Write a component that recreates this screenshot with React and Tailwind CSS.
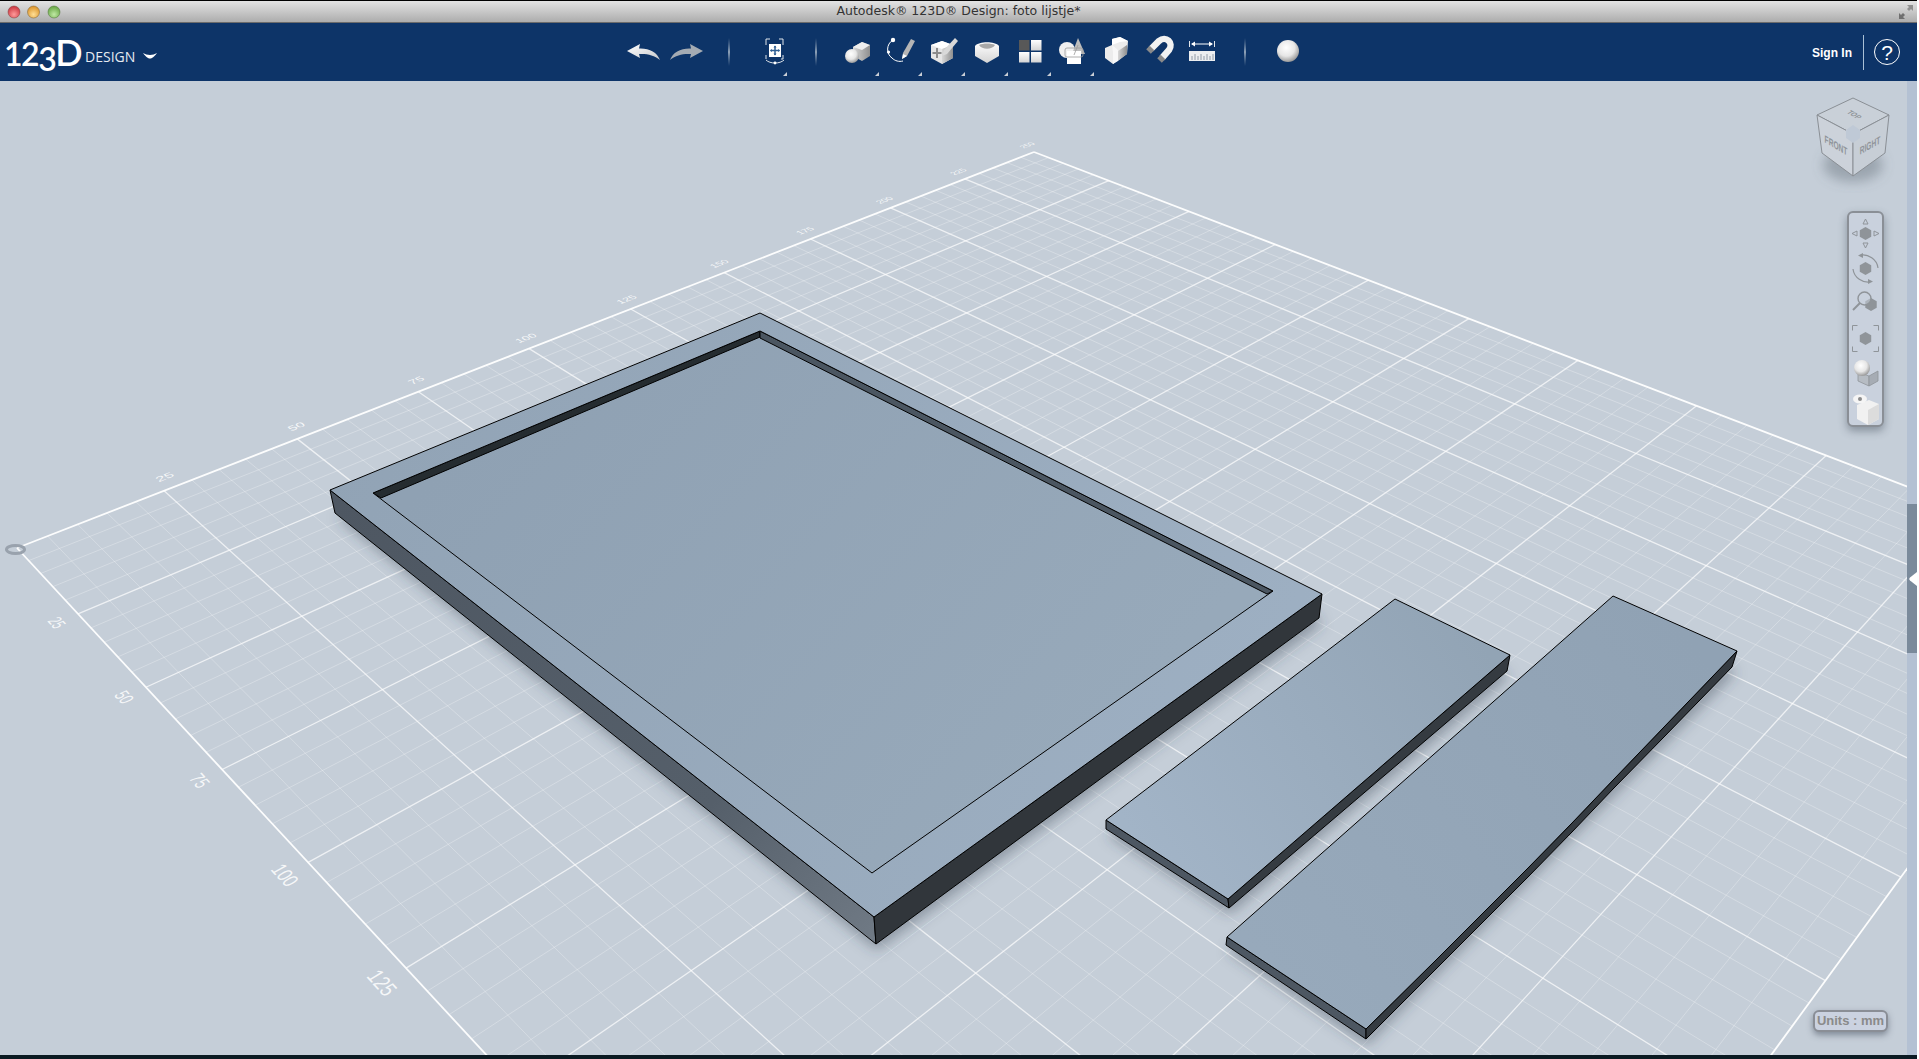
import React from 'react'

// projective map from grid units (0..250) to screen pixels
const makeHomography = () => {
  const [x0, y0] = [17, 548]
  const [x1, y1] = [1034, 152]
  const [x2, y2] = [2125, 570]
  const [x3, y3] = [1205, 1831]
  const dx1 = x1 - x2, dx2 = x3 - x2, sx = x0 - x1 + x2 - x3
  const dy1 = y1 - y2, dy2 = y3 - y2, sy = y0 - y1 + y2 - y3
  const det = dx1 * dy2 - dx2 * dy1
  const g = (sx * dy2 - dx2 * sy) / det
  const h = (dx1 * sy - sx * dy1) / det
  const a = x1 - x0 + g * x1, b = x3 - x0 + h * x3
  const d = y1 - y0 + g * y1, e = y3 - y0 + h * y3
  return (u, v) => {
    const s = u / 250, t = v / 250
    const w = g * s + h * t + 1
    return [(a * s + b * t + x0) / w, (d * s + e * t + y0) / w]
  }
}

const H = makeHomography()

const range = []
for (let i = 0; i <= 250; i += 5) range.push(i)

const lineStyle = (n) => {
  if (n === 0 || n === 250) return { o: 0.95, w: 1.8 }
  if (n % 25 === 0) return { o: 0.7, w: 1.3 }
  return { o: 0.34, w: 0.8 }
}

const Grid = () => (
  <g>
    {range.map((n) => {
      const s = lineStyle(n)
      const [a, b] = H(n, 0)
      const [c, d] = H(n, 250)
      const [e, f] = H(0, n)
      const [g, h] = H(250, n)
      return (
        <g key={n} stroke="#ffffff" strokeOpacity={s.o} strokeWidth={s.w}>
          <line x1={a} y1={b} x2={c} y2={d} />
          <line x1={e} y1={f} x2={g} y2={h} />
        </g>
      )
    })}
  </g>
)

const PlaneLabel = ({ u, v, text, alongV }) => {
  const [px, py] = H(u, v)
  const [ax, ay] = H(u + 1, v)
  const [bx, by] = H(u, v + 1)
  const k = 0.27
  const m = alongV
    ? [(bx - px) * k, (by - py) * k, (px - ax) * k, (py - ay) * k, px, py]
    : [(ax - px) * k, (ay - py) * k, (bx - px) * k, (by - py) * k, px, py]
  return (
    <text
      transform={`matrix(${m.join(' ')})`}
      fontSize="10"
      textAnchor="middle"
      dominantBaseline="middle"
      fill="#ffffff"
      fillOpacity="0.85"
      fontFamily="'Liberation Sans', sans-serif"
    >
      {text}
    </text>
  )
}

const uLabels = [25, 50, 75, 100, 125, 150, 175, 200, 225, 250]
const vLabels = [25, 50, 75, 100, 125]

const Scene = () => (
  <svg viewBox="0 81 1907 974" className="absolute inset-0 w-full h-full">
    <defs>
      <filter id="blur" x="-20%" y="-20%" width="140%" height="140%">
        <feGaussianBlur stdDeviation="7" />
      </filter>
      <linearGradient id="frameTop" gradientUnits="userSpaceOnUse" x1="330" y1="400" x2="1300" y2="800">
        <stop offset="0" stopColor="#91a3b5" />
        <stop offset="1" stopColor="#9eb0c3" />
      </linearGradient>
      <linearGradient id="floor" gradientUnits="userSpaceOnUse" x1="500" y1="400" x2="1000" y2="850">
        <stop offset="0" stopColor="#8fa1b3" />
        <stop offset="1" stopColor="#97a9ba" />
      </linearGradient>
      <linearGradient id="frameSide" gradientUnits="userSpaceOnUse" x1="335" y1="500" x2="876" y2="930">
        <stop offset="0" stopColor="#4e5762" />
        <stop offset="0.7" stopColor="#555f6a" />
        <stop offset="1" stopColor="#6f7984" />
      </linearGradient>
      <linearGradient id="board1" gradientUnits="userSpaceOnUse" x1="1150" y1="860" x2="1480" y2="640">
        <stop offset="0" stopColor="#a2b4c7" />
        <stop offset="1" stopColor="#92a4b5" />
      </linearGradient>
      <linearGradient id="board2" gradientUnits="userSpaceOnUse" x1="1280" y1="980" x2="1690" y2="640">
        <stop offset="0" stopColor="#97a9bb" />
        <stop offset="1" stopColor="#90a2b4" />
      </linearGradient>
    </defs>

    <Grid />

    {uLabels.map((n) => (
      <PlaneLabel key={n} u={n + 2} v={-4} text={n} />
    ))}
    {vLabels.map((n) => (
      <PlaneLabel key={n} u={-3.5} v={n} text={n} alongV />
    ))}

    <ellipse cx="15.5" cy="549.5" rx="9" ry="4" fill="none" stroke="#99a2ad" strokeWidth="3" />

    {/* shadows */}
    <g fill="#3a4350" fillOpacity="0.42" filter="url(#blur)">
      <polygon points="338,518 877,950 1322,624 1300,600 760,340" />
      <polygon points="1108,835 1230,914 1510,676 1400,620" />
      <polygon points="1228,951 1367,1045 1736,672 1620,610" />
    </g>

    {/* picture frame */}
    <polygon points="330,490 874,917 876,944 335,513" fill="url(#frameSide)" stroke="#000" strokeLinejoin="round" />
    <polygon points="874,917 1322,594 1319,618 876,944" fill="#31363b" stroke="#000" strokeLinejoin="round" />
    <polygon points="373,493 760,331 1273,591 872,873" fill="url(#floor)" />
    <polygon points="373,493 760,331 760,337 381,498" fill="#252c30" stroke="#000" strokeWidth="1" />
    <polygon points="760,331 1273,591 1267,594 760,338" fill="#4b5661" stroke="#000" strokeWidth="1" />
    <path
      d="M330 490 L760 313 L1322 594 L874 917 Z M373 493 L872 873 L1273 591 L760 331 Z"
      fill="url(#frameTop)"
      fillRule="evenodd"
      stroke="#000"
      strokeWidth="1"
      strokeLinejoin="round"
    />

    {/* first board */}
    <polygon points="1106,820 1228,899 1229,908 1106,829" fill="#4d5762" stroke="#000" />
    <polygon points="1228,899 1510,655 1507,671 1229,908" fill="#353b41" stroke="#000" />
    <polygon points="1395,599 1510,655 1228,899 1106,820" fill="url(#board1)" stroke="#000" />

    {/* second board, its long edge bends a little */}
    <polygon points="1227,937 1366,1029 1366,1039 1226,945" fill="#4d5762" stroke="#000" />
    <polygon
      points="1366,1029 1435,961 1481,915 1528,868 1572,823 1614,779 1664,727 1737,651 1732,667 1664,737 1614,788 1572,832 1528,877 1481,924 1435,970 1366,1039"
      fill="#353b41"
      stroke="#000"
    />
    <polygon
      points="1613,596 1737,651 1664,727 1614,779 1572,823 1528,868 1481,915 1435,961 1366,1029 1227,937"
      fill="url(#board2)"
      stroke="#000"
    />
  </svg>
)

const Defs = () => (
  <svg className="absolute w-0 h-0">
    <defs>
      <linearGradient id="whiteFade" x1="0" y1="0" x2="1" y2="1">
        <stop offset="0" stopColor="#ffffff" />
        <stop offset="1" stopColor="#c4c7cb" />
      </linearGradient>
      <linearGradient id="grayFace" x1="0" y1="0" x2="1" y2="0">
        <stop offset="0" stopColor="#d8d8d8" />
        <stop offset="1" stopColor="#8f8f8f" />
      </linearGradient>
      <linearGradient id="lightFace" x1="0" y1="0" x2="0" y2="1">
        <stop offset="0" stopColor="#ffffff" />
        <stop offset="1" stopColor="#d4d4d4" />
      </linearGradient>
      <linearGradient id="sepFade" x1="0" y1="0" x2="0" y2="1">
        <stop offset="0" stopColor="#6d84a0" stopOpacity="0" />
        <stop offset="0.5" stopColor="#8fa2b8" />
        <stop offset="1" stopColor="#6d84a0" stopOpacity="0" />
      </linearGradient>
      <radialGradient id="ball" cx="0.42" cy="0.35" r="0.7">
        <stop offset="0" stopColor="#ffffff" />
        <stop offset="0.55" stopColor="#e6e6e6" />
        <stop offset="1" stopColor="#8c8c8c" />
      </radialGradient>
      <radialGradient id="btnRed" cx="0.5" cy="0.7" r="0.7">
        <stop offset="0" stopColor="#ff9a9a" />
        <stop offset="1" stopColor="#c8303a" />
      </radialGradient>
      <radialGradient id="btnYellow" cx="0.5" cy="0.7" r="0.7">
        <stop offset="0" stopColor="#ffdf95" />
        <stop offset="1" stopColor="#d98f24" />
      </radialGradient>
      <radialGradient id="btnGreen" cx="0.5" cy="0.7" r="0.7">
        <stop offset="0" stopColor="#c0e9a4" />
        <stop offset="1" stopColor="#62a23e" />
      </radialGradient>
    </defs>
  </svg>
)

const Marker = () => <polygon points="39,53 43,53 43,49" fill="#c9ced6" />

const ToolSlot = ({ marker, children }) => (
  <svg width="43" height="58" viewBox="0 0 43 58" className="overflow-visible shrink-0">
    {children}
    {marker && <Marker />}
  </svg>
)

const Separator = ({ className }) => (
  <svg width="2" height="28" className={className}>
    <rect width="2" height="28" fill="url(#sepFade)" />
  </svg>
)

const PrimitivesIcon = () => (
  <ToolSlot marker>
    <polygon points="26,19 34,22 34,33 26,38 17,33 17,24" fill="url(#grayFace)" />
    <polygon points="17,24 26,19 34,22 26,27" fill="#efefef" />
    <circle cx="16" cy="33" r="7" fill="url(#ball)" />
  </ToolSlot>
)

const SketchIcon = () => (
  <ToolSlot marker>
    <path d="M14 17 C7 21 7 31 13 35 C16 38 20 39 24 38" fill="none" stroke="#ffffff" strokeWidth="1" />
    <circle cx="14" cy="17" r="2.2" fill="#fff" />
    <circle cx="9.5" cy="29" r="1.6" fill="#fff" />
    <polygon points="23,36 24,30 32,16 36,18 28,33" fill="#b5b5b5" />
    <polygon points="23,36 24,31 28,33" fill="#ffffff" />
  </ToolSlot>
)

const ConstructIcon = () => (
  <ToolSlot marker>
    <polygon points="9,22 20,18 31,22 31,35 20,41 9,35" fill="#e6e6e6" />
    <polygon points="9,22 20,18 31,22 20,26" fill="#ffffff" />
    <polygon points="20,26 31,22 31,35 20,41" fill="url(#grayFace)" />
    <path d="M15 25 V35 M10.5 30 H19.5" stroke="#8c8c8c" strokeWidth="2" />
    <polygon points="20,33 22,27 33,15 36,18 25,31" fill="#d9d9d9" />
  </ToolSlot>
)

const ModifyIcon = () => (
  <ToolSlot marker>
    <path d="M10 23 C14 18 30 18 34 23 L34 33 L22 40 L10 33 Z" fill="url(#lightFace)" />
    <path d="M14 22 C18 20 26 20 30 22 C27 27 17 27 14 22 Z" fill="#a8a8a8" />
  </ToolSlot>
)

const PatternIcon = () => (
  <ToolSlot marker>
    <rect x="11" y="17" width="10.5" height="10.5" fill="#585858" />
    <rect x="23" y="17" width="10.5" height="10.5" fill="url(#lightFace)" />
    <rect x="11" y="29" width="10.5" height="10.5" fill="url(#lightFace)" />
    <rect x="23" y="29" width="10.5" height="10.5" fill="url(#lightFace)" />
  </ToolSlot>
)

const GroupIcon = () => (
  <ToolSlot marker>
    <circle cx="16" cy="27" r="8" fill="#f0f0f0" />
    <polygon points="27,15 34,31 21,31" fill="#bdbdbd" />
    <rect x="16" y="28" width="14" height="13" fill="#ffffff" />
    <rect x="14" y="25" width="18" height="9" rx="2" fill="none" stroke="#9a9a9a" strokeWidth="0.8" />
    <path d="M23 32 L27 22" stroke="#9a9a9a" strokeWidth="0.8" />
  </ToolSlot>
)

const CombineIcon = () => (
  <ToolSlot>
    <polygon points="11,25 18,22 18,16 26,14 34,18 33,31 23,38 19,41 11,35" fill="#ececec" />
    <polygon points="18,22 26,19 34,18 26,14 18,16" fill="#ffffff" />
    <polygon points="24,28 33,22 33,31 24,38" fill="url(#grayFace)" />
    <polygon points="18,22 24,27 24,38 19,41 19,29" fill="#f8f8f8" />
  </ToolSlot>
)

const SnapIcon = () => (
  <ToolSlot>
    <path d="M14 26 L22 18 C29 12 37 20 32 27 L25 35" fill="none" stroke="#f2f2f2" strokeWidth="6.5" />
    <path d="M11.5 28.5 L15 25 M22.5 37.5 L26 34" stroke="#8a8a8a" strokeWidth="6.5" fill="none" />
  </ToolSlot>
)

const MeasureIcon = () => (
  <ToolSlot>
    <path d="M9.5 18 V24 M34.5 18 V24" stroke="#e2e6ea" strokeWidth="1" />
    <path d="M12 21 H32" stroke="#ffffff" strokeWidth="1" />
    <path d="M15 18.5 L11 21 L15 23.5 Z M29 18.5 L33 21 L29 23.5 Z" fill="#ffffff" />
    <rect x="9" y="28" width="26" height="10" fill="#eceef0" />
    <path d="M12 37 V33 M15 37 V31 M18 37 V33 M21 37 V31 M24 37 V33 M27 37 V31 M30 37 V33 M33 37 V31" stroke="#7b8794" strokeWidth="0.8" />
  </ToolSlot>
)

const TitleBar = () => (
  <div className="h-[23px] shrink-0 relative flex items-center justify-center border-t border-b border-t-black border-b-[#6b6b6b] bg-gradient-to-b from-[#e3e3e3] to-[#adadad]">
    <svg width="70" height="20" className="absolute left-0 top-0">
      <circle cx="14" cy="11" r="6" fill="url(#btnRed)" stroke="#7d3d3d" strokeOpacity="0.5" />
      <circle cx="33.5" cy="11" r="6" fill="url(#btnYellow)" stroke="#80602b" strokeOpacity="0.5" />
      <circle cx="54" cy="11" r="6" fill="url(#btnGreen)" stroke="#4c7036" strokeOpacity="0.5" />
    </svg>
    <span className="text-[12.5px] text-[#333] font-['DejaVu_Sans',sans-serif]">
      Autodesk® 123D® Design: foto lijstje*
    </span>
    <svg width="16" height="16" viewBox="0 0 16 16" className="absolute left-[1898px] top-[3px]">
      <path d="M9 1 H15 V7 L13 5 L11 7 L9 5 L11 3 Z" fill="#8f8f8f" />
      <path d="M7 15 H1 V9 L3 11 L5 9 L7 11 L5 13 Z" fill="#6f6f6f" />
    </svg>
  </div>
)

const Toolbar = () => (
  <div className="h-[58px] shrink-0 bg-[#0d3468] flex items-center text-white font-['Open_Sans',sans-serif]">
    <div className="w-[627px] shrink-0 flex items-center pl-[4px]">
      <span className="text-[32px] leading-none font-semibold tracking-[-1.5px] font-['Lato',sans-serif]">
        12<span className="inline-block translate-y-[5px]">3</span>
        <span className="text-[36px]">D</span>
      </span>
      <span className="ml-[4px] mt-[9px] text-[14px] leading-none text-[#e6ebf2]">DESIGN</span>
      <svg width="16" height="8" viewBox="0 0 16 8" className="ml-[7px] mt-[7px]">
        <path d="M1 1 C5 3.5 11 3.5 15 1 C12 5 10 6.5 8 6.5 C6 6.5 4 5 1 1 Z" fill="#ffffff" />
      </svg>
    </div>

    <svg width="33" height="16" viewBox="0 0 33 16" className="shrink-0">
      <path d="M0 7 L13 0 L12 4.5 C22 4 30 8 33 16 C27 11 20 9.5 12 10 L13 14 Z" fill="url(#whiteFade)" />
    </svg>
    <svg width="33" height="16" viewBox="0 0 33 16" className="shrink-0 ml-[10px]">
      <path d="M33 7 L20 0 L21 4.5 C11 4 3 8 0 16 C6 11 13 9.5 21 10 L20 14 Z" fill="#a4abb3" />
    </svg>

    <Separator className="ml-[25px] shrink-0" />

    <svg width="30" height="58" viewBox="0 0 30 58" className="ml-[29px] shrink-0 overflow-visible">
      <path d="M9 22 V16 H13 M22 16 H26 V22 M9 32 V36 M26 32 V36 H24" fill="none" stroke="#dfe4ea" strokeWidth="1" transform="translate(-2 0)" />
      <rect x="10" y="21" width="12" height="13" fill="#ffffff" />
      <path d="M16 23 V32 M11.5 27.5 H20.5" stroke="#2f5f94" strokeWidth="1.5" />
      <path d="M16 22.5 L14.5 24.5 H17.5 Z M16 32.5 L14.5 30.5 H17.5 Z M11 27.5 L13 26 V29 Z M21 27.5 L19 26 V29 Z" fill="#2f5f94" />
      <path d="M7 37 C11 41 21 41 25 37" fill="none" stroke="#dfe4ea" strokeWidth="1" />
      <circle cx="16" cy="40" r="1.4" fill="#ffffff" />
      <polygon points="24,53 28,53 28,49" fill="#c9ced6" />
    </svg>

    <Separator className="ml-[26px] shrink-0" />

    <div className="ml-[19px] flex shrink-0">
      <PrimitivesIcon />
      <SketchIcon />
      <ConstructIcon />
      <ModifyIcon />
      <PatternIcon />
      <GroupIcon />
      <CombineIcon />
      <SnapIcon />
      <MeasureIcon />
    </div>

    <Separator className="ml-[21px] shrink-0" />

    <svg width="24" height="24" viewBox="0 0 24 24" className="ml-[30px] shrink-0 -mt-[2px]">
      <circle cx="12" cy="12" r="11" fill="url(#ball)" />
    </svg>

    <span className="ml-auto mt-[1px] text-[12px] font-semibold font-['Liberation_Sans',sans-serif]">Sign In</span>
    <div className="ml-[11px] w-px h-[35px] bg-[#a9c0d6]" />
    <div className="ml-[10px] mr-[17px] w-[26px] h-[26px] rounded-full border border-white flex items-center justify-center text-[21px] leading-none font-['Liberation_Sans',sans-serif]">
      ?
    </div>
  </div>
)

const ViewCube = () => (
  <svg viewBox="1800 85 110 115" width="110" height="115" className="absolute left-[1800px] top-[4px]">
    <defs>
      <filter id="cubeBlur" x="-30%" y="-30%" width="160%" height="160%">
        <feGaussianBlur stdDeviation="6" />
      </filter>
    </defs>
    <ellipse cx="1853" cy="165" rx="30" ry="17" fill="#5c6672" fillOpacity="0.4" filter="url(#cubeBlur)" />
    <polygon points="1817,115 1853,98 1889,115 1853,134" fill="#c9d0d8" stroke="#8a8f95" />
    <polygon points="1817,115 1853,134 1853,176 1822,153" fill="#ccd2da" stroke="#8a8f95" />
    <polygon points="1853,134 1889,115 1885,153 1853,176" fill="#c7ced6" stroke="#8a8f95" />
    <polygon points="1853,125 1860,130 1860,138 1853,143 1846,138 1846,130" fill="#bfc9d6" />
    <g fill="#8f9499" fontFamily="'Liberation Sans', sans-serif" fontWeight="700" textAnchor="middle">
      <text transform="matrix(0.62 0.36 -0.75 0.45 1852 116)" fontSize="9">TOP</text>
      <text transform="matrix(0.78 0.46 0 1.25 1836 149)" fontSize="8.5">FRONT</text>
      <text transform="matrix(0.78 -0.44 0 1.25 1870 149)" fontSize="8.5">RIGHT</text>
    </g>
  </svg>
)

const hexPoints = (cx, cy, r) =>
  [
    [cx, cy - r],
    [cx + r * 0.88, cy - r * 0.5],
    [cx + r * 0.88, cy + r * 0.5],
    [cx, cy + r],
    [cx - r * 0.88, cy + r * 0.5],
    [cx - r * 0.88, cy - r * 0.5],
  ]
    .map((p) => p.join(','))
    .join(' ')

const NavSlot = ({ children }) => (
  <svg width="33" height="35" viewBox="0 0 33 35" className="overflow-visible">
    {children}
  </svg>
)

const NavBar = () => (
  <div className="absolute right-[23px] top-[130px] w-[37px] h-[216px] rounded-[6px] border-2 border-[#8a8f96] bg-[#c9d1dd] shadow-[0_4px_8px_rgba(60,70,85,0.45)] flex flex-col pt-[3px]">
    <NavSlot>
      <polygon points={hexPoints(16.5, 17.5, 6.5)} fill="#8f9499" />
      <path d="M16.5 3 L14 8 H19 Z M16.5 32 L14 27 H19 Z M3 17.5 L8 15 V20 Z M30 17.5 L25 15 V20 Z" fill="none" stroke="#8f9499" strokeWidth="1" />
    </NavSlot>
    <NavSlot>
      <polygon points={hexPoints(16.5, 17.5, 6.5)} fill="#8f9499" />
      <path d="M12 4 C19 3 28 8 29 17" fill="none" stroke="#8f9499" strokeWidth="1.2" />
      <path d="M21 31 C14 32 5 27 4 18" fill="none" stroke="#8f9499" strokeWidth="1.2" />
      <path d="M9 4.5 L14 2 V7 Z M24 30.5 L19 28 V33 Z" fill="#8f9499" />
    </NavSlot>
    <NavSlot>
      <polygon points={hexPoints(22, 18.5, 6.5)} fill="#8f9499" />
      <circle cx="15.5" cy="12.5" r="6.5" fill="#c9d1dd" fillOpacity="0.5" stroke="#8f9499" strokeWidth="1.4" />
      <path d="M11 17 L4 24" stroke="#8f9499" strokeWidth="2" />
    </NavSlot>
    <NavSlot>
      <polygon points={hexPoints(16.5, 17.5, 6.5)} fill="#8f9499" />
      <path d="M3.5 9.5 V4.5 H8.5 M24.5 4.5 H29.5 V9.5 M3.5 25.5 V30.5 H8.5 M24.5 30.5 H29.5 V25.5" fill="none" stroke="#8f9499" strokeWidth="1" />
    </NavSlot>
    <NavSlot>
      <polygon points="9,16 20,20 20,30 9,25" fill="#b6bcc3" stroke="#8f9499" strokeWidth="0.8" />
      <polygon points="20,20 29,15 29,25 20,30" fill="#a6acb4" stroke="#8f9499" strokeWidth="0.8" />
      <circle cx="13" cy="12" r="8" fill="url(#ball)" />
    </NavSlot>
    <NavSlot>
      <polygon points="8,14 20,9 30,13 30,28 19,34 8,28" fill="#f1f1f1" />
      <polygon points="19,19 30,13 30,28 19,34" fill="#dcdcdc" />
      <ellipse cx="11" cy="8" rx="7" ry="4.5" fill="#f5f5f5" />
      <circle cx="11" cy="8" r="2" fill="#8a8a8a" />
    </NavSlot>
  </div>
)

const Handle = () => (
  <div className="mt-[423px] h-[149px] bg-[#7a8a9b] flex items-center justify-end">
    <svg width="8" height="14" viewBox="0 0 8 14">
      <path d="M8 0 V14 L1 8.5 C0 7.5 0 6.5 1 5.5 Z" fill="#ffffff" />
    </svg>
  </div>
)

export default function App() {
  return (
    <div className="w-[1919px] h-[1059px] bg-white overflow-hidden">
      <Defs />
      <div className="w-[1917px] h-full flex flex-col">
        <TitleBar />
        <Toolbar />
        <div className="flex-1 flex min-h-0">
          <div className="flex-1 relative bg-[#c5ced8] overflow-hidden">
            <Scene />
            <ViewCube />
            <NavBar />
            <div className="absolute right-[19px] bottom-[23px] w-[75px] h-[22px] rounded-[6px] border-2 border-[#8a8e96] bg-[#cbd2e0] shadow-[0_3px_6px_rgba(60,70,85,0.5)] flex items-center justify-center text-[13px] font-bold text-[#8a8a8a] font-['Liberation_Sans',sans-serif]">
              Units : mm
            </div>
          </div>
          <div className="w-[10px] shrink-0 bg-[#b4c1d3]">
            <Handle />
          </div>
        </div>
        <div className="h-[4px] shrink-0 bg-[#0b1a22]" />
      </div>
    </div>
  )
}
